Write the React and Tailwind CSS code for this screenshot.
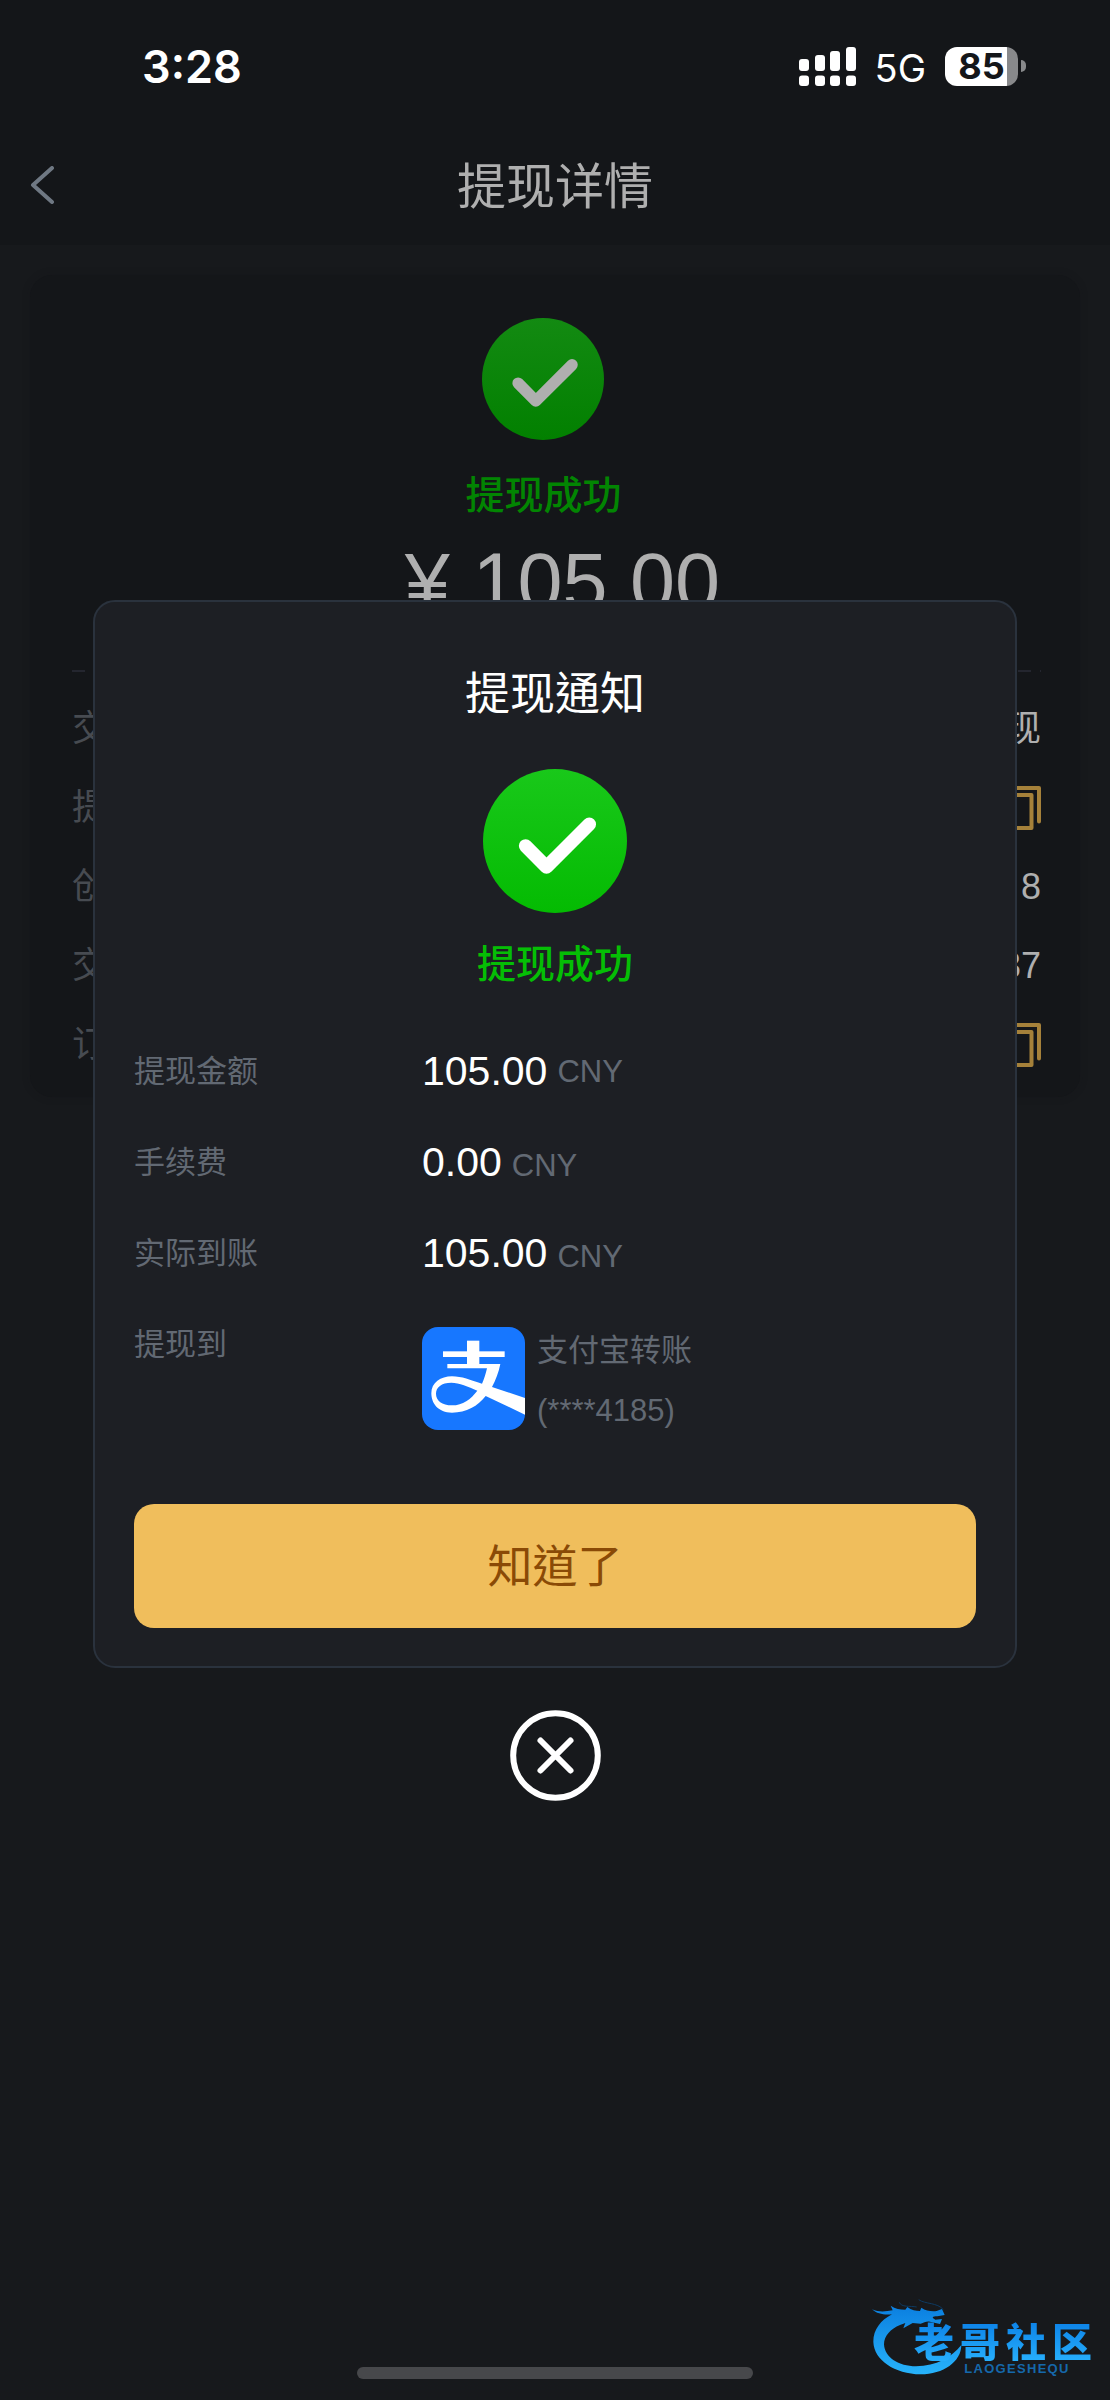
import { useId } from "react";

const SANS = "font-['Liberation_Sans','Noto_Sans_CJK_SC',sans-serif]";
const SANS_TC = "font-['Liberation_Sans','Noto_Sans_CJK_TC',sans-serif]";

function SignalIcon() {
  const bars = [
    { x: 0, y: 12, h: 12 },
    { x: 16, y: 8, h: 16 },
    { x: 31, y: 4, h: 20 },
    { x: 47, y: 0, h: 24 },
  ];
  return (
    <svg width="57" height="39" viewBox="0 0 57 39" fill="#fff" aria-hidden="true">
      {bars.map((b) => (
        <g key={b.x}>
          <rect x={b.x} y={b.y} width="10" height={b.h} rx="3" />
          <rect x={b.x} y="28.5" width="10" height="10.5" rx="3" />
        </g>
      ))}
    </svg>
  );
}

function Battery() {
  return (
    <div className="flex items-center gap-[3px]">
      <div className="flex h-[39px] w-[73px] items-center justify-center rounded-xl bg-linear-to-r from-white from-85% to-[#88898b] to-85%">
        <span className="font-['Inter',sans-serif] text-[36px] leading-none font-bold text-[#141619]">85</span>
      </div>
      <div className="h-3 w-[5px] rounded-r-full bg-[#88898b]" />
    </div>
  );
}

function StatusBar() {
  return (
    <div className="flex h-32 items-center justify-between pt-1 pr-[84px] pl-[142px] font-['Inter',sans-serif] text-white">
      <time className="text-[45px] leading-none font-semibold">3:28</time>
      <div className="flex items-center gap-[19px]">
        <SignalIcon />
        <span className="pt-1 text-[38px] leading-none">5G</span>
        <Battery />
      </div>
    </div>
  );
}

function CheckBadge({ className, from, to, tick }) {
  const id = useId();
  return (
    <svg className={className} viewBox="0 0 100 100" aria-hidden="true">
      <defs>
        <linearGradient id={id} x1="0" y1="0" x2="0" y2="1">
          <stop offset="0" stopColor={from} />
          <stop offset="1" stopColor={to} />
        </linearGradient>
      </defs>
      <circle cx="50" cy="50" r="50" fill={`url(#${id})`} />
      <path
        d="M29.6 53.4 44.1 68 73.8 38.4"
        fill="none"
        stroke={tick}
        strokeWidth="9.4"
        strokeLinecap="round"
        strokeLinejoin="round"
      />
    </svg>
  );
}

function CopyIcon() {
  return (
    <svg width="36" height="44" viewBox="0 0 36 44" fill="none" stroke="#a5813a" strokeWidth="4" strokeLinecap="round" strokeLinejoin="round" aria-hidden="true">
      <path d="M9 2H34V35.5" />
      <rect x="2" y="9" width="24.5" height="33" />
    </svg>
  );
}

function AlipayIcon() {
  return (
    <svg className="size-[103px] shrink-0 rounded-2xl" viewBox="22 23 309 309" role="img" aria-label="支付宝">
      <rect x="22" y="23" width="309" height="309" fill="#1777ff" />
      <g fill="#fff">
        <rect x="85" y="96" width="185" height="17" />
        <rect x="157" y="64" width="37" height="75" />
        <path
          fillRule="evenodd"
          d="M98 134H257C252 160 243 182 232 203L331 236V286L213 230C190 260 155 280 112 280C70 280 50 252 50 222C50 190 78 171 112 171C142 171 166 182 202 193C208 180 213 164 217 147H98ZM188 214C160 202 134 190 110 190C80 190 64 204 64 223C64 244 82 258 112 258C145 258 168 240 188 214Z"
        />
      </g>
    </svg>
  );
}

function DetailRow({ label, children }) {
  return (
    <div className="flex h-[79px] items-center justify-between">
      <dt className="text-[#474b51]">{label}</dt>
      <dd className="flex text-[#afafaf]">{children}</dd>
    </div>
  );
}

function DetailsCard() {
  return (
    <section className="mx-[30px] mt-[30px] rounded-[22px] bg-[#141619] pt-[43px] pr-[39px] pb-[13px] pl-[42px] shadow-[0_0_8px_rgba(20,22,25,0.2)]">
      <div className="flex flex-col items-center">
        <div className="flex flex-col items-center pr-[26px]">
          <CheckBadge className="size-[122px]" from="#138a12" to="#028000" tick="#afafaf" />
          <p className="mt-[26px] text-[39px] leading-[60px] font-medium text-[#028502]">提现成功</p>
        </div>
        <p className="mt-2 pl-3 text-[81px] leading-[96px] text-[#afafaf]">¥ 105.00</p>
      </div>
      <div className="mt-[40px] h-0.5 bg-[repeating-linear-gradient(90deg,#24262f_0_13px,transparent_13px_22px)]" />
      <dl className="mt-[17px] text-[36px] leading-[54px]">
        <DetailRow label="交易类型">提现</DetailRow>
        <DetailRow label="提现单号">
          <button type="button" aria-label="复制提现单号"><CopyIcon /></button>
        </DetailRow>
        <DetailRow label="创建时间">8</DetailRow>
        <DetailRow label="交易时间">37</DetailRow>
        <DetailRow label="订单">
          <button type="button" aria-label="复制订单号"><CopyIcon /></button>
        </DetailRow>
      </dl>
    </section>
  );
}

function SummaryRow({ label, children }) {
  return (
    <div className="flex items-start">
      <dt className="w-[288px] shrink-0">{label}</dt>
      <dd>{children}</dd>
    </div>
  );
}

function Amount({ value, align = "items-baseline" }) {
  return (
    <span className={`flex h-[51px] gap-2.5 ${align}`}>
      <span className="text-[41px] text-white">{value}</span>
      <span>CNY</span>
    </span>
  );
}

function NoticeDialog() {
  return (
    <div className="absolute inset-0 flex flex-col items-center justify-center px-[93px]">
      <div role="dialog" aria-modal="true" aria-labelledby="notice-title" className="w-full rounded-[22px] border-2 border-[#2a323d] bg-[#1d1f24] px-[39px] pt-[63px] pb-[38px]">
        <h2 id="notice-title" className={`text-center text-[45px] leading-[60px] text-white ${SANS_TC}`}>提现通知</h2>
        <CheckBadge className="mx-auto mt-11 size-36" from="#19c81a" to="#04bb02" tick="#fff" />
        <p className="mt-[22px] text-center text-[39px] leading-[60px] font-medium text-[#05be05]">提现成功</p>
        <dl className="mt-[51px] flex flex-col gap-10 text-[31px] leading-[51px] text-[#626973]">
          <SummaryRow label="提现金额"><Amount value="105.00" align="items-center" /></SummaryRow>
          <SummaryRow label="手续费"><Amount value="0.00" /></SummaryRow>
          <SummaryRow label="实际到账"><Amount value="105.00" /></SummaryRow>
          <SummaryRow label="提现到">
            <div className="flex items-start gap-3 pt-2">
              <AlipayIcon />
              <div className="-mt-1.5 leading-[60px]">
                <p>支付宝转账</p>
                <p>(****4185)</p>
              </div>
            </div>
          </SummaryRow>
        </dl>
        <button type="button" className={`mt-[63px] h-[124px] w-full rounded-[20px] bg-[#f0be5c] pt-1 text-[45px] text-[#8a4a06] ${SANS_TC}`}>知道了</button>
      </div>
      <button type="button" aria-label="关闭" className="mt-[42px]">
        <svg width="91" height="91" viewBox="0 0 91 91" fill="none" stroke="#fff" strokeWidth="6" strokeLinecap="round" aria-hidden="true">
          <circle cx="45.5" cy="45.5" r="42.3" />
          <path d="M30.5 30.5l30 30M60.5 30.5l-30 30" />
        </svg>
      </button>
    </div>
  );
}

function Watermark() {
  return (
    <div className="absolute right-[18px] bottom-[23px] flex items-end">
      <svg className="-mr-[50px]" width="94" height="80" viewBox="60 50 282 240" aria-hidden="true">
        <defs>
          <linearGradient id="dragon" x1="0" y1="0" x2="0" y2="1">
            <stop offset="0" stopColor="#0b7fe0" />
            <stop offset="1" stopColor="#27b3fb" />
          </linearGradient>
        </defs>
        <path
          fill="url(#dragon)"
          d="M66 87C86 96 106 94 128 90L122 76C136 86 150 88 166 88L172 80C184 90 198 92 210 92L214 82C228 92 246 94 260 92L276 86L284 104L262 108C246 108 244 112 256 118L276 116L270 131L240 124C230 122 222 126 212 130L188 128L160 144L166 128L150 134C122 146 102 166 102 192C104 232 146 258 198 258C260 256 304 232 334 194C334 244 280 282 212 282C134 280 72 240 70 184C70 148 92 120 126 102C104 104 82 102 66 87Z"
        />
        <path d="M148 66C154 82 180 76 200 80M206 58C226 72 262 66 280 88" fill="none" stroke="#0d3a61" strokeWidth="3" />
      </svg>
      <div className="flex flex-col items-center">
        <span className="flex gap-1.5 bg-linear-to-b from-[#0b7fe6] to-[#27aefb] bg-clip-text font-['Noto_Sans_CJK_SC',sans-serif] text-[40px] leading-[42px] font-black text-transparent">
          {["老", "哥", "社", "区"].map((c) => (
            <span key={c}>{c}</span>
          ))}
        </span>
        <span className="pl-7 text-[13px] leading-4 font-bold tracking-widest text-[#1568ab]">LAOGESHEQU</span>
      </div>
    </div>
  );
}

export default function App() {
  return (
    <div className={`relative min-h-screen bg-[#17191c] ${SANS}`}>
      <header className="bg-[#141619]">
        <StatusBar />
        <div className="relative flex h-[117px] items-center justify-center">
          <button type="button" aria-label="返回" className="absolute left-[30px] pb-1">
            <svg width="25" height="38" viewBox="0 0 25 38" fill="none" stroke="#6f7883" strokeWidth="4" strokeLinecap="round" strokeLinejoin="round" aria-hidden="true">
              <path d="M22 2 3 19 22 36" />
            </svg>
          </button>
          <h1 className="text-[49px] leading-[60px] text-[#afafaf]">提现详情</h1>
        </div>
      </header>
      <main>
        <DetailsCard />
      </main>
      <NoticeDialog />
      <div className="absolute inset-x-0 bottom-[21px] mx-auto h-3 w-[396px] rounded-full bg-[#47484b]" />
      <Watermark />
    </div>
  );
}
